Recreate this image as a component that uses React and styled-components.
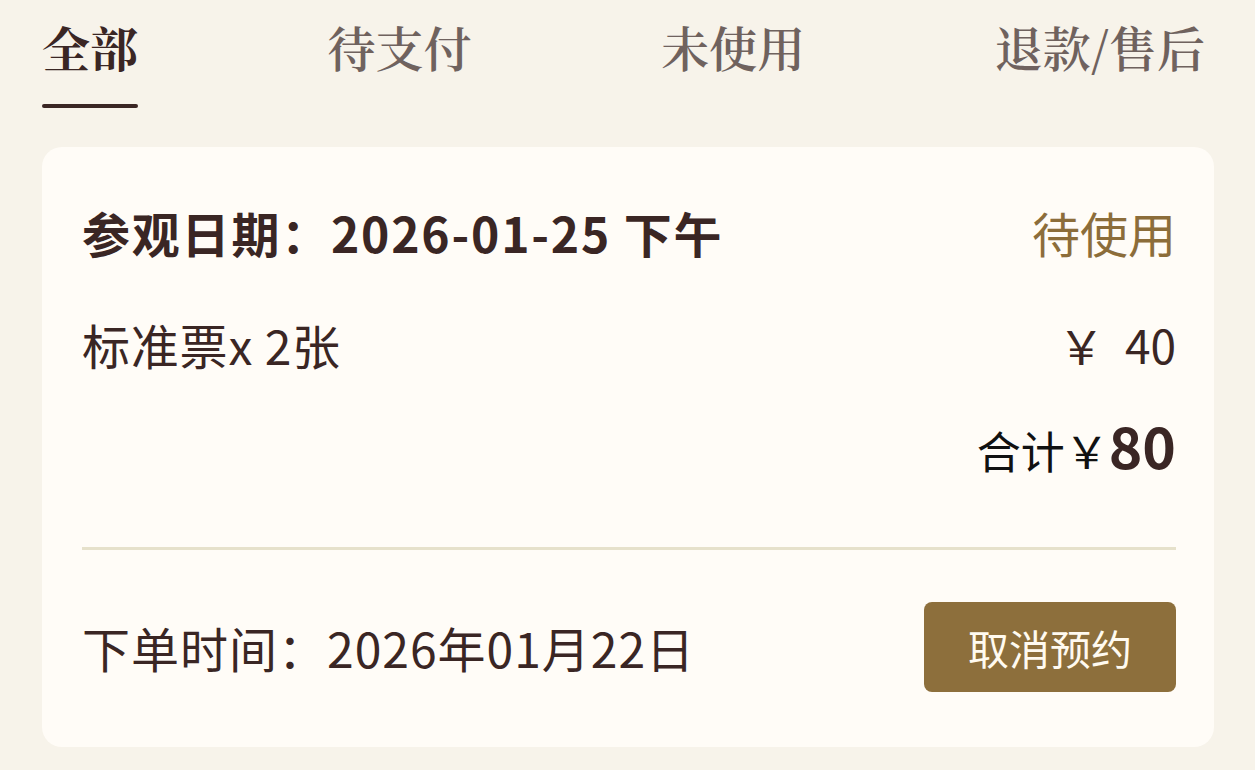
import React from "react";
import styled, { createGlobalStyle } from "styled-components";

const Global = createGlobalStyle`
  body {
    margin: 0;
    background: #f7f3ea;
    font-family: "Noto Sans CJK SC", "Noto Sans", sans-serif;
    color: #3a2624;
  }
`;

const Page = styled.div`
  padding: 0 41px 0 42px;
`;

const Tabs = styled.div`
  display: flex;
  justify-content: space-between;
  padding: 20px 9px 0 0;
`;

const Tab = styled.div`
  display: flex;
  flex-direction: column;
  align-items: stretch;
  font-family: "Noto Serif CJK SC", "Noto Sans CJK SC", serif;
  font-size: 48px;
  line-height: 54px;
  font-weight: ${(p) => (p.active ? 700 : 600)};
  color: ${(p) => (p.active ? "#3a2624" : "#6f625e")};
  &::after {
    content: "";
    display: block;
    height: 4px;
    margin-top: 30px;
    border-radius: 2px;
    background: ${(p) => (p.active ? "#3a2624" : "transparent")};
  }
`;

const Card = styled.div`
  margin-top: 39px;
  background: #fffcf7;
  border-radius: 20px;
  padding: 56px 38px 55px 40px;
`;

const Row = styled.div`
  display: flex;
  justify-content: space-between;
  align-items: center;
  margin-top: ${(p) => p.gap || 0}px;
`;

const Title = styled.div`
  font-size: 48px;
  line-height: 58px;
  font-weight: 700;
  letter-spacing: 1.8px;
`;

const Status = styled.div`
  font-size: 48px;
  line-height: 58px;
  color: #8c6d3a;
`;

const Item = styled.div`
  font-size: 48px;
  line-height: 58px;
  letter-spacing: 0.8px;
`;

const Price = styled.div`
  font-size: 46px;
  line-height: 58px;
  white-space: pre;
`;

const Total = styled.div`
  margin-left: auto;
  display: flex;
  align-items: baseline;
  font-size: 44px;
  line-height: 70px;
  color: #111;
  white-space: pre;
  b {
    font-size: 57px;
    font-weight: 700;
    color: #3a2624;
  }
`;

const Divider = styled.div`
  height: 3px;
  background: #e6e1cb;
  margin-top: 62px;
`;

const OrderTime = styled.div`
  font-size: 48px;
  line-height: 58px;
  letter-spacing: 1px;
`;

const Button = styled.button`
  width: 252px;
  height: 90px;
  border: none;
  border-radius: 8px;
  background: #8d6f3c;
  color: #fffaf0;
  font-family: inherit;
  font-size: 41px;
  padding: 0;
`;

const tabs = ["全部", "待支付", "未使用", "退款/售后"];

export default function App() {
  return (
    <Page>
      <Global />
      <Tabs>
        {tabs.map((t, i) => (
          <Tab key={t} active={i === 0}>
            {t}
          </Tab>
        ))}
      </Tabs>
      <Card>
        <Row>
          <Title>参观日期：2026-01-25 下午</Title>
          <Status>待使用</Status>
        </Row>
        <Row gap={54}>
          <Item>标准票x 2张</Item>
          <Price>￥  40</Price>
        </Row>
        <Row gap={36}>
          <Total>
            合计￥<b>80</b>
          </Total>
        </Row>
        <Divider />
        <Row gap={52}>
          <OrderTime>下单时间：2026年01月22日</OrderTime>
          <Button>取消预约</Button>
        </Row>
      </Card>
    </Page>
  );
}
